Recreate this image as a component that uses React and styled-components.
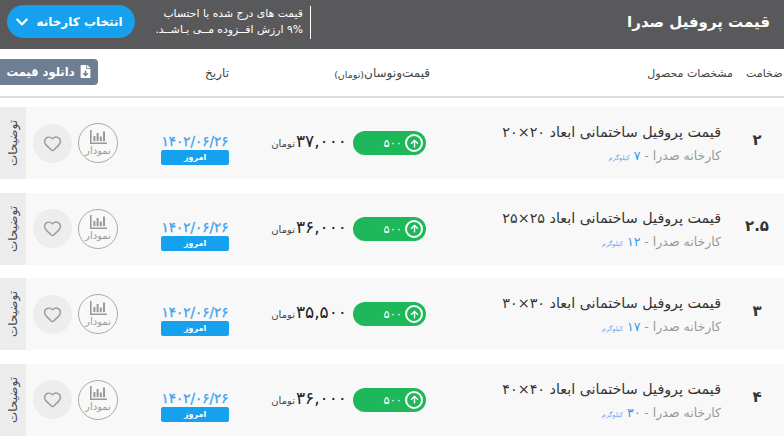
import React from "react";
import styled, { createGlobalStyle } from "styled-components";
import { Heart } from "lucide-react";
import { FaChevronDown, FaFileDownload, FaArrowUp } from "react-icons/fa";

const Global = createGlobalStyle`
  html, body { margin: 0; padding: 0; background: #fff; overflow: hidden; }
  body { width: 784px; height: 442px; font-family: "DejaVu Sans", "Noto Sans", sans-serif; }
  * { box-sizing: border-box; }
`;
const Page = styled.div`width: 784px; height: 442px; overflow: hidden; display: flex; flex-direction: column;`;
const TopBar = styled.header`
  height: 49px; background: #59595b; display: flex; align-items: flex-start; padding: 5px 14px 0 7px; color: #fff; flex: none;
`;
const PickButton = styled.button`
  width: 128px; height: 33px; border: 0; border-radius: 17px; background: #16a1ee; color: #fff;
  font: bold 12px "DejaVu Sans", sans-serif; display: flex; align-items: center; justify-content: center; gap: 7px; padding: 0 4px 0 0;
`;
const Notice = styled.div`
  direction: rtl; width: 154px; height: 33px; margin: 1px 0 0 22px; padding-right: 7px; border-right: 1px solid #fff; flex: none;
  font-size: 10.8px; line-height: 16px; text-align: right; white-space: nowrap;
`;
const PageTitle = styled.h1`margin: 6px 0 0 auto; font-size: 15px; line-height: 22px; font-weight: 700; direction: rtl; white-space: nowrap;`;
const Heads = styled.div`
  height: 49px; flex: none; border-bottom: 2px solid #ddd; display: grid; grid-template-columns: 146px 98px 186px 300px 54px; align-items: center;
  color: #444; white-space: nowrap;
`;
const Head = styled.div`
  direction: rtl; display: flex; justify-content: flex-start; font-size: ${p => p.$size}px; padding-right: ${p => p.$right || 0}px; margin-top: 1px;
  small { font-size: 9.5px; align-self: flex-end; }
`;
const OffsetHead = styled(Head)`margin-right: ${p => p.$shift || 0}px;`;
const SizeHead = styled(Head)`direction: ltr; padding-left: 16px;`;
const Download = styled.button`
  width: 98px; height: 26px; margin-top: -2px; border: 0; border-radius: 0 4px 4px 0; background: #6e7f93; color: #fff;
  font: bold 11.5px "DejaVu Sans", sans-serif; display: flex; direction: rtl; align-items: center; justify-content: center; gap: 4px; padding: 0;
`;
const Rows = styled.div`display: flex; flex-direction: column; gap: 13.67px; padding-top: 9px;`;
const Row = styled.section`
  height: 72px; flex: none; background: #f8f8f8; display: grid; grid-template-columns: 26px 120px 98px 186px 300px 54px; align-items: center;
`;
const SideTab = styled.div`
  height: 100%; background: #ececec; color: #4a4a4a; font-size: 12px; writing-mode: vertical-rl; transform: rotate(180deg); display: flex; align-items: center; justify-content: center; direction: rtl;
`;
const Actions = styled.div`display: flex; gap: 6px; padding-left: 7px; align-items: center;`;
const HeartBtn = styled.div`width: 39px; height: 39px; border-radius: 50%; background: #ededed; color: #999; display: flex; align-items: center; justify-content: center;`;
const ChartBtn = styled.div`
  width: 40px; height: 40px; border-radius: 50%; border: 1px solid #aaa; color: #999; display: flex; flex-direction: column; align-items: center; justify-content: center; font-size: 10px; line-height: 12px; gap: 1px;
`;
const DateCol = styled.div`display: flex; flex-direction: column; align-items: center; margin-top: 12px;`;
const DateText = styled.div`color: #3ea3ee; font-size: 13.5px; line-height: 17px; -webkit-text-stroke: .3px #3ea3ee;`;
const Today = styled.div`width: 68px; height: 15px; background: #16a1ee; border-radius: 2px; color: #fff; font-size: 8px; font-weight: 700; display: flex; align-items: center; justify-content: center;`;
const PriceCol = styled.div`display: flex; justify-content: flex-end; align-items: center; gap: 6px; padding-right: 4px;`;
const Price = styled.div`display: flex; align-items: baseline; direction: ltr; color: #222; margin-top: -4px;`;
const Unit = styled.span`font-size: 10px; color: #444; margin-right: 1px;`;
const Amount = styled.span`font-size: 17px; letter-spacing: .6px;`;
const Pill = styled.div`
  width: 73px; height: 24px; border-radius: 12px; background: #1eb75a; color: #fff; display: flex; align-items: center; justify-content: flex-end; gap: 3px; padding-right: 3px; font-size: 11.5px;
`;
const UpCircle = styled.span`width: 18px; height: 18px; border: 2px solid #fff; border-radius: 50%; display: flex; align-items: center; justify-content: center;`;
const Product = styled.div`direction: rtl; padding-right: 9px; margin-top: 4px; white-space: nowrap;`;
const Name = styled.div`font-size: 14.3px; color: #333; line-height: 24px;`;
const Sub = styled.div`font-size: 12.5px; color: #999; line-height: 24px; b { color: #2d9bec; font-weight: 400; } small { font-size: 6.5px; color: #6aa8ee; }`;
const Size = styled.div`text-align: center; font-size: 15px; font-weight: 700; color: #333; margin-top: -6px;`;

const ChartIcon = () => (
  <svg width="17" height="14" viewBox="0 0 17 14" fill="currentColor">
    <path d="M0 0h1.6v12.4H17V14H0z" />
    <rect x="3.4" y="6" width="2" height="5.2" />
    <rect x="6.6" y="3" width="2" height="8.2" />
    <rect x="9.8" y="6.5" width="2" height="4.7" />
    <rect x="13" y="1.5" width="2" height="9.7" />
  </svg>
);

const rows = [
  { size: "۲", name: "قیمت پروفیل ساختمانی ابعاد ۲۰×۲۰", w: "۷", price: "۳۷,۰۰۰" },
  { size: "۲.۵", name: "قیمت پروفیل ساختمانی ابعاد ۲۵×۲۵", w: "۱۲", price: "۳۶,۰۰۰" },
  { size: "۳", name: "قیمت پروفیل ساختمانی ابعاد ۳۰×۳۰", w: "۱۷", price: "۳۵,۵۰۰" },
  { size: "۴", name: "قیمت پروفیل ساختمانی ابعاد ۴۰×۴۰", w: "۳۰", price: "۳۶,۰۰۰" },
];

export default function App() {
  return (
    <Page>
      <Global />
      <TopBar>
        <PickButton><FaChevronDown size={14} /><span>انتخاب کارخانه</span></PickButton>
        <Notice>قیمت های درج شده با احتساب<br />۹% ارزش افــزوده مــی بـاشــد.</Notice>
        <PageTitle>قیمت پروفیل صدرا</PageTitle>
      </TopBar>
      <Heads>
        <Download><FaFileDownload size={13} /><span>دانلود قیمت</span></Download>
        <Head $size={12} $right={15}>تاریخ</Head>
        <Head $size={12}>قیمت‌ونوسان<small>(تومان)</small></Head>
        <OffsetHead $size={11} $shift={-3}>مشخصات محصول</OffsetHead>
        <SizeHead $size={11}>ضخامت</SizeHead>
      </Heads>
      <Rows>
        {rows.map(r => (
          <Row key={r.size}>
            <SideTab>توضیحات</SideTab>
            <Actions>
              <HeartBtn><Heart size={19} strokeWidth={1.8} /></HeartBtn>
              <ChartBtn><ChartIcon /><span dir="rtl">نمودار</span></ChartBtn>
            </Actions>
            <DateCol><DateText>۱۴۰۲/۰۶/۲۶</DateText><Today>امروز</Today></DateCol>
            <PriceCol>
              <Price><Unit>تومان</Unit><Amount>{r.price}</Amount></Price>
              <Pill><span>۵۰۰</span><UpCircle><FaArrowUp size={9} /></UpCircle></Pill>
            </PriceCol>
            <Product>
              <Name>{r.name}</Name>
              <Sub>کارخانه صدرا - <b>{r.w}</b> <small>کیلوگرم</small></Sub>
            </Product>
            <Size>{r.size}</Size>
          </Row>
        ))}
      </Rows>
    </Page>
  );
}
